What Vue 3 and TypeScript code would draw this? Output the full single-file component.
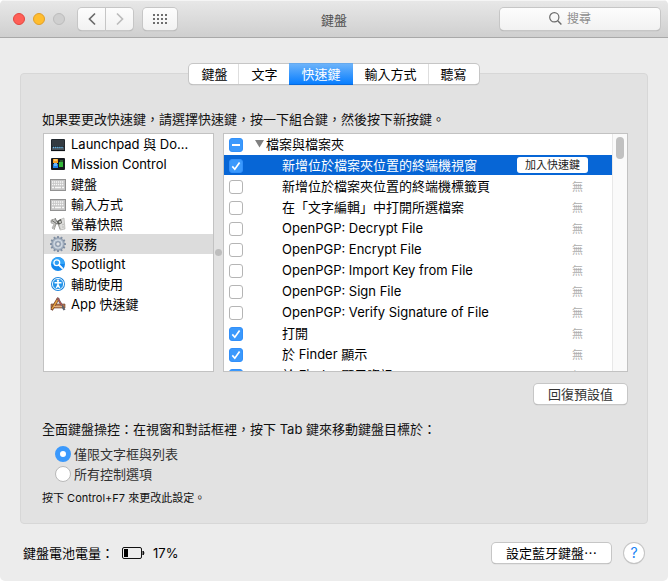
<script setup lang="ts">
import { ref } from 'vue'

type IconName =
  | 'launchpad'
  | 'mission'
  | 'keyboard'
  | 'screenshot'
  | 'gear'
  | 'spotlight'
  | 'access'
  | 'app'

interface Category {
  label: string
  icon: IconName
}

interface Service {
  label: string
  checked: boolean
}

const tabs: string[] = ['鍵盤', '文字', '快速鍵', '輸入方式', '聽寫']
const activeTab = ref('快速鍵')

const categories: Category[] = [
  { label: 'Launchpad 與 Do...', icon: 'launchpad' },
  { label: 'Mission Control', icon: 'mission' },
  { label: '鍵盤', icon: 'keyboard' },
  { label: '輸入方式', icon: 'keyboard' },
  { label: '螢幕快照', icon: 'screenshot' },
  { label: '服務', icon: 'gear' },
  { label: 'Spotlight', icon: 'spotlight' },
  { label: '輔助使用', icon: 'access' },
  { label: 'App 快速鍵', icon: 'app' },
]
const activeCategory = ref(5)

const services = ref<Service[]>([
  { label: '新增位於檔案夾位置的終端機視窗', checked: true },
  { label: '新增位於檔案夾位置的終端機標籤頁', checked: false },
  { label: '在「文字編輯」中打開所選檔案', checked: false },
  { label: 'OpenPGP: Decrypt File', checked: false },
  { label: 'OpenPGP: Encrypt File', checked: false },
  { label: 'OpenPGP: Import Key from File', checked: false },
  { label: 'OpenPGP: Sign File', checked: false },
  { label: 'OpenPGP: Verify Signature of File', checked: false },
  { label: '打開', checked: true },
  { label: '於 Finder 顯示', checked: true },
  { label: '於 Finder 顯示資訊', checked: true },
])
const activeService = ref(0)

const groupChecked = ref(true)
const query = ref('')
const access = ref('text')
const gearTeeth: number[] = Array.from({ length: 12 }, (_, i) => i * 30)
const dotColumns: number[] = [0, 1, 2, 3]
const dotRows: number[] = [0, 1, 2]
</script>

<template>
  <div class="window" lang="zh-Hant">
    <header class="titlebar">
      <div class="tools">
        <div class="lights">
          <button class="light close" aria-label="關閉"></button>
          <button class="light minimize" aria-label="縮到最小"></button>
          <button class="light zoom" aria-label="縮放" disabled></button>
        </div>
        <div class="history">
          <button class="tool" aria-label="上一頁">
            <svg width="10" height="14" viewBox="0 0 10 14"><path d="M8 1.5 2.5 7 8 12.5" fill="none" stroke="#6b6b6b" stroke-width="1.7" /></svg>
          </button>
          <button class="tool" aria-label="下一頁" disabled>
            <svg width="10" height="14" viewBox="0 0 10 14"><path d="M2 1.5 7.5 7 2 12.5" fill="none" stroke="#bcbcbc" stroke-width="1.7" /></svg>
          </button>
        </div>
        <button class="tool all" aria-label="顯示全部">
          <svg width="14" height="10" viewBox="0 0 14 10">
            <template v-for="row in dotRows" :key="row">
              <rect v-for="column in dotColumns" :key="column" :x="column * 4" :y="row * 4" width="2" height="2" fill="#6e6e6e" />
            </template>
          </svg>
        </button>
      </div>
      <h1 class="title">鍵盤</h1>
      <label class="search">
        <svg width="13" height="13" viewBox="0 0 13 13">
          <circle cx="5.3" cy="5.3" r="4.6" fill="none" stroke="#6a6a6a" stroke-width="1.2" />
          <path d="M8.7 8.7 12.4 12.4" stroke="#6a6a6a" stroke-width="1.4" />
        </svg>
        <input v-model="query" type="text" placeholder="搜尋" aria-label="搜尋" />
      </label>
    </header>

    <main class="body">
      <section class="panel">
        <nav class="tabs">
          <button v-for="tab in tabs" :key="tab" class="tab" :class="{ active: tab === activeTab }" @click="activeTab = tab">{{ tab }}</button>
        </nav>

        <div class="content">
          <p class="hint">如果要更改快速鍵，請選擇快速鍵，按一下組合鍵，然後按下新按鍵。</p>

          <div class="lists">
            <ul class="list categories">
              <li v-for="(item, index) in categories" :key="item.label">
                <button class="category" :class="{ active: index === activeCategory }" @click="activeCategory = index">
                  <svg class="icon" width="16" height="16" viewBox="0 0 16 16">
                    <g v-if="item.icon === 'launchpad'">
                      <rect x="1" y="3" width="14" height="12" rx="1" fill="#20262c" />
                      <rect x="2" y="4" width="12" height="6" fill="#343b42" />
                      <rect x="2" y="11" width="12" height="3" fill="#47515a" />
                      <path d="M3 11.5H13" stroke="#67bdf0" stroke-width="1.4" stroke-dasharray="1.2 .9" />
                      <path d="M1 14.6H15" stroke="#0d1013" />
                    </g>
                    <g v-else-if="item.icon === 'mission'">
                      <rect x="1" y="2" width="14" height="12" rx="1" fill="#15191d" />
                      <rect x="3" y="3" width="5" height="4" fill="#f5a024" />
                      <rect x="4" y="3" width="3" height="2" fill="#ffc765" />
                      <rect x="3" y="8" width="5" height="4" fill="#1f84ea" />
                      <rect x="4" y="7" width="3" height="3" fill="#6cb5f5" />
                      <rect x="9" y="6" width="4" height="5" fill="#35b83b" />
                      <rect x="10" y="4" width="3" height="2" fill="#2b5c2e" />
                    </g>
                    <g v-else-if="item.icon === 'keyboard'">
                      <rect x=".5" y="3.5" width="15" height="11" fill="#c4c4c4" stroke="#929292" />
                      <path d="M2 6H14M2 8.5H14" stroke="#f7f7f7" stroke-width="1.5" stroke-dasharray="1.3 .7" />
                      <path d="M2 11.5H4M12 11.5H14M5 11.5H11" stroke="#f7f7f7" stroke-width="1.5" />
                    </g>
                    <g v-else-if="item.icon === 'screenshot'">
                      <path d="M1 4 5 3 6 8 3 13 2 12 4 8 1 7Z" fill="#c5c5c2" stroke="#8b8b88" stroke-width=".5" />
                      <path d="M2 4.5 7 8M5 2 8 8" stroke="#6e6f6c" stroke-width="1" />
                      <path d="M9 4 14 2 15 13 10 14Z" fill="#dededc" stroke="#a6a6a3" stroke-width=".6" />
                      <path d="M7 5 11 3 12 7 8 9Z" fill="#52534f" />
                      <circle cx="10" cy="6" r="1.3" fill="#b8bab5" />
                      <path d="M6 8 4 14M8 8 10 13M3 3 1 6" stroke="#959590" stroke-width=".9" />
                      <path d="M12 9 14 8M12 11 14 11" stroke="#b3b3b0" stroke-width=".8" />
                    </g>
                    <g v-else-if="item.icon === 'gear'">
                      <rect v-for="angle in gearTeeth" :key="angle" x="7" y="0" width="2" height="4" rx=".6" fill="#8190a4" :transform="`rotate(${angle} 8 8)`" />
                      <circle cx="8" cy="8" r="6.3" fill="#a9b5c4" stroke="#75859a" stroke-width=".6" />
                      <circle cx="8" cy="8" r="4" fill="none" stroke="#d8e0e9" stroke-width="1.1" />
                      <circle cx="8" cy="8" r="2.2" fill="#e2e4e7" stroke="#72839a" stroke-width=".8" />
                    </g>
                    <g v-else-if="item.icon === 'spotlight'">
                      <circle cx="8" cy="8" r="7" fill="#1488ee" />
                      <path d="M1.3 8a6.7 6.7 0 0 1 13.4 0" fill="#35a6f9" />
                      <circle cx="6.8" cy="6.7" r="2.9" fill="#2f9ff5" stroke="#fff" stroke-width="1.3" />
                      <path d="M9 9 12.2 12.2" stroke="#fff" stroke-width="1.8" stroke-linecap="round" />
                    </g>
                    <g v-else-if="item.icon === 'access'">
                      <circle cx="8" cy="8" r="7" fill="#1c84dc" />
                      <circle cx="8" cy="8" r="5.6" fill="#2695ea" stroke="#e9f5ff" stroke-width="1" />
                      <circle cx="8" cy="4.8" r="1.2" fill="#fff" />
                      <path d="M4.5 6.8H11.5M8 6.8V9M8 8.6 6.4 12M8 8.6 9.6 12" stroke="#fff" stroke-width="1.4" fill="none" />
                    </g>
                    <g v-else>
                      <path d="M1 8H15V12H1Z" fill="#b77b50" stroke="#6f4228" stroke-width=".6" />
                      <path d="M1.5 14 8.5 2" stroke="#713a27" stroke-width="2.8" />
                      <path d="M2 13.2 8 3" stroke="#e3a340" stroke-width="1.5" />
                      <path d="M7.5 2 14.5 14" stroke="#5c616b" stroke-width="2.2" />
                      <path d="M7.5 2 12 9.5" stroke="#c4514b" stroke-width="1.1" />
                      <path d="M4 10.5H12" stroke="#e0b181" stroke-width="1.2" />
                    </g>
                  </svg>
                  <span>{{ item.label }}</span>
                </button>
              </li>
            </ul>

            <div class="divider"><span class="grip"></span></div>

            <div class="list services">
              <div class="rows">
                <div class="row group">
                  <span class="check">
                    <input id="group" v-model="groupChecked" type="checkbox" />
                    <svg width="14" height="14" viewBox="0 0 14 14"><path d="M3 7H11" stroke="#fff" stroke-width="2" /></svg>
                  </span>
                  <label class="name" for="group">
                    <svg width="10" height="8" viewBox="0 0 10 8"><path d="M0 0H9L4.5 7.5Z" fill="#808080" /></svg>檔案與檔案夾
                  </label>
                </div>
                <div v-for="(item, index) in services" :key="item.label" class="row" :class="{ active: index === activeService }" @click="activeService = index">
                  <span class="check">
                    <input :id="`service-${index}`" v-model="item.checked" type="checkbox" />
                    <svg v-if="item.checked" width="14" height="14" viewBox="0 0 14 14"><path d="M3.3 7.4 5.8 10.2 10.6 3.4" fill="none" stroke="#fff" stroke-width="1.7" /></svg>
                  </span>
                  <label class="name" :for="`service-${index}`">{{ item.label }}</label>
                  <button v-if="index === activeService" class="add">加入快速鍵</button>
                  <span v-else class="none">無</span>
                </div>
              </div>
              <div class="track"><span class="thumb"></span></div>
            </div>
          </div>

          <button class="push reset">回復預設值</button>

          <fieldset class="access">
            <legend>全面鍵盤操控：在視窗和對話框裡，按下 Tab 鍵來移動鍵盤目標於：</legend>
            <label class="option"><input v-model="access" type="radio" name="access" value="text" />僅限文字框與列表</label>
            <label class="option"><input v-model="access" type="radio" name="access" value="all" />所有控制選項</label>
          </fieldset>
          <p class="note">按下 Control+F7 來更改此設定。</p>
        </div>
      </section>
    </main>

    <footer class="footer">
      <span>鍵盤電池電量：</span>
      <svg class="battery" width="23" height="12" viewBox="0 0 23 12">
        <rect x=".5" y=".5" width="19" height="11" rx="1.5" fill="none" stroke="#111" />
        <rect x="2" y="2" width="4" height="8" fill="#000" />
        <path d="M21 4Q23 6 21 8Z" fill="#111" stroke="#111" />
      </svg>
      <span>17%</span>
      <button class="push bluetooth">設定藍牙鍵盤⋯</button>
      <button class="help" aria-label="輔助說明">?</button>
    </footer>
  </div>
</template>

<style>
body {
  margin: 0;
  background: #fff;
}
</style>

<style scoped>
.window {
  display: flex;
  flex-direction: column;
  box-sizing: border-box;
  height: 100vh;
  min-height: 480px;
  overflow: hidden;
  border-radius: 5px;
  background: #ececec;
  color: #111;
  font: 13px/20px Inter, "Noto Sans CJK TC", sans-serif;
}

button,
input {
  margin: 0;
  padding: 0;
  border: 0;
  font: inherit;
  color: inherit;
}

svg {
  display: block;
  flex: none;
}

.titlebar {
  display: grid;
  grid-template-columns: 1fr auto 1fr;
  align-items: center;
  box-sizing: border-box;
  height: 38px;
  padding: 0 8px;
  border-bottom: 1px solid #a9a9a9;
  background: linear-gradient(#e8e8e8, #cfcfcf);
  box-shadow: inset 0 1px #f5f5f5;
}

.tools {
  display: flex;
  align-items: center;
  gap: 10px;
  padding-left: 5px;
}

.lights {
  display: flex;
  gap: 8px;
  margin-right: 3px;
}

.light {
  box-sizing: border-box;
  width: 12px;
  height: 12px;
  border: 1px solid #bcbcbc;
  border-radius: 50%;
  background: #cfcfcf;
}

.close {
  border-color: #e2463f;
  background: #ff5f57;
}

.minimize {
  border-color: #e09e29;
  background: #ffbd2e;
}

.history {
  display: flex;
  gap: 1px;
}

.tool {
  display: flex;
  align-items: center;
  justify-content: center;
  width: 27px;
  height: 22px;
  border-radius: 4px;
  background: linear-gradient(#fdfdfd, #f2f2f2);
  box-shadow: 0 0 0 1px #c6c6c6, 0 1px 1px #999;
}

.history .tool:first-child {
  border-radius: 4px 0 0 4px;
}

.history .tool:last-child {
  border-radius: 0 4px 4px 0;
}

.all {
  width: 34px;
}

.title {
  margin: 2px 0 0;
  font-size: 13px;
  font-weight: 400;
  color: #505050;
}

.search {
  display: flex;
  align-items: center;
  justify-self: end;
  gap: 5px;
  box-sizing: border-box;
  width: 160px;
  height: 22px;
  padding-left: 49px;
  border-radius: 4px;
  background: linear-gradient(#fdfdfd, #f2f2f2);
  box-shadow: 0 0 0 1px #c6c6c6, 0 1px 1px #999;
}

.search input {
  flex: 1;
  min-width: 0;
  outline: none;
  background: none;
  font-size: 12px;
}

.search input::placeholder {
  color: #8e8e8e;
}

.body {
  display: flex;
  flex: 1;
  min-height: 0;
  padding: 35px 20px 0;
}

.panel {
  display: flex;
  flex: 1;
  flex-direction: column;
  box-sizing: border-box;
  min-width: 0;
  padding: 0 19px 15px;
  border: 1px solid #d7d7d7;
  border-radius: 4px;
  background: #e2e2e2;
}

.content {
  display: flex;
  flex: 1;
  flex-direction: column;
  min-height: 0;
  padding-left: 3px;
}

.tabs {
  display: flex;
  align-self: center;
  height: 20px;
  margin-top: -10px;
  border-radius: 4px;
  background: #fff;
  box-shadow: 0 0 0 1px #c6c6c6, 0 1px 1px #999;
}

.tab {
  padding: 0 12px;
  background: none;
  line-height: 20px;
  color: #000;
}

.tab + .tab {
  box-shadow: -1px 0 #dedede;
}

.tab:first-child {
  border-radius: 4px 0 0 4px;
}

.tab:last-child {
  border-radius: 0 4px 4px 0;
}

.tab.active {
  background: linear-gradient(#6cb3fa, #087eff);
  box-shadow: 0 -1px #65a9ee, 0 1px #0669dc;
  color: #fff;
}

.tab.active + .tab {
  box-shadow: none;
}

.hint {
  margin: 25px 0 4px -1px;
}

.lists {
  display: flex;
  flex: 1;
  min-height: 0;
}

.list {
  box-sizing: border-box;
  overflow: hidden;
  border: 1px solid #c2c2c2;
  background: #fff;
  color: #000;
}

.categories {
  flex: 0 0 171px;
  margin: 0;
  padding: 0;
  list-style: none;
}

.category {
  display: flex;
  align-items: center;
  gap: 5px;
  width: 100%;
  height: 20px;
  padding-left: 6px;
  background: none;
  text-align: left;
  white-space: nowrap;
}

.category.active {
  background: #dcdcdc;
}

.divider {
  display: flex;
  align-items: center;
  justify-content: center;
  flex: 0 0 9px;
}

.grip {
  width: 7px;
  height: 7px;
  border-radius: 50%;
  background: #bdbdbd;
}

.services {
  display: flex;
  flex: 1;
  min-width: 0;
}

.rows {
  flex: 1;
  min-width: 0;
}

.row {
  display: flex;
  align-items: center;
  height: 20px;
  margin-bottom: 1px;
  padding: 0 24px 0 5px;
}

.row.active {
  background: #0766d6;
  color: #fff;
}

.check {
  display: grid;
  flex: none;
  margin-top: 2px;
}

.check input,
.check svg {
  grid-area: 1 / 1;
}

.check svg {
  pointer-events: none;
}

.check input {
  box-sizing: border-box;
  width: 14px;
  height: 14px;
  border: 1px solid #b5b5b5;
  border-radius: 3px;
  appearance: none;
  background: #fff;
}

.check input:checked {
  border-color: #3290fa;
  background: #3b99fc;
}

.name {
  flex: 1;
  min-width: 0;
  padding-left: 39px;
  overflow: hidden;
  white-space: nowrap;
}

.group .name {
  display: flex;
  align-items: center;
  gap: 1px;
  padding-left: 12px;
}

.none {
  margin-top: 2px;
  padding-right: 5px;
  font-size: 11px;
  color: #adadad;
}

.add {
  height: 16px;
  padding: 0 8px;
  border-radius: 3px;
  background: #fff;
  font-size: 11px;
  line-height: 16px;
  color: #222;
}

.track {
  display: flex;
  justify-content: center;
  align-items: flex-start;
  box-sizing: border-box;
  width: 15px;
  padding-top: 3px;
  border-left: 1px solid #e8e8e8;
  background: #fafafa;
}

.thumb {
  width: 8px;
  height: 22px;
  border-radius: 4px;
  background: #c1c1c1;
}

.push {
  height: 20px;
  border-radius: 4px;
  background: #fff;
  box-shadow: 0 0 0 1px #c6c6c6, 0 1px 1px #999;
  line-height: 20px;
}

.reset {
  align-self: flex-end;
  margin: 12px 1px 0 0;
  padding: 0 14px;
  color: #333;
}

.access {
  min-width: 0;
  margin: 15px 0 0 -1px;
  padding: 0;
  border: 0;
}

.access legend {
  margin-bottom: 5px;
  padding: 0;
}

.option {
  display: flex;
  align-items: center;
  gap: 3px;
  padding-left: 13px;
  color: #333;
}

.option input {
  box-sizing: border-box;
  width: 16px;
  height: 16px;
  border: 1px solid #b9b9b9;
  border-radius: 50%;
  appearance: none;
  background: #fff;
}

.option input:checked {
  border: 5px solid #3b99fc;
}

.note {
  margin: 4px 0 0 -1px;
  font-size: 11px;
}

.footer {
  display: flex;
  align-items: center;
  height: 57px;
  padding: 0 24px 0 23px;
  color: #000;
}

.battery {
  margin: 0 8px;
}

.bluetooth {
  margin-left: auto;
  padding: 0 14px;
}

.help {
  width: 20px;
  height: 20px;
  margin-left: 13px;
  border-radius: 50%;
  background: #fff;
  box-shadow: 0 0 0 1px #c6c6c6, 0 1px 1px #999;
  font-size: 14px;
  line-height: 20px;
  color: #1583f5;
}
</style>
